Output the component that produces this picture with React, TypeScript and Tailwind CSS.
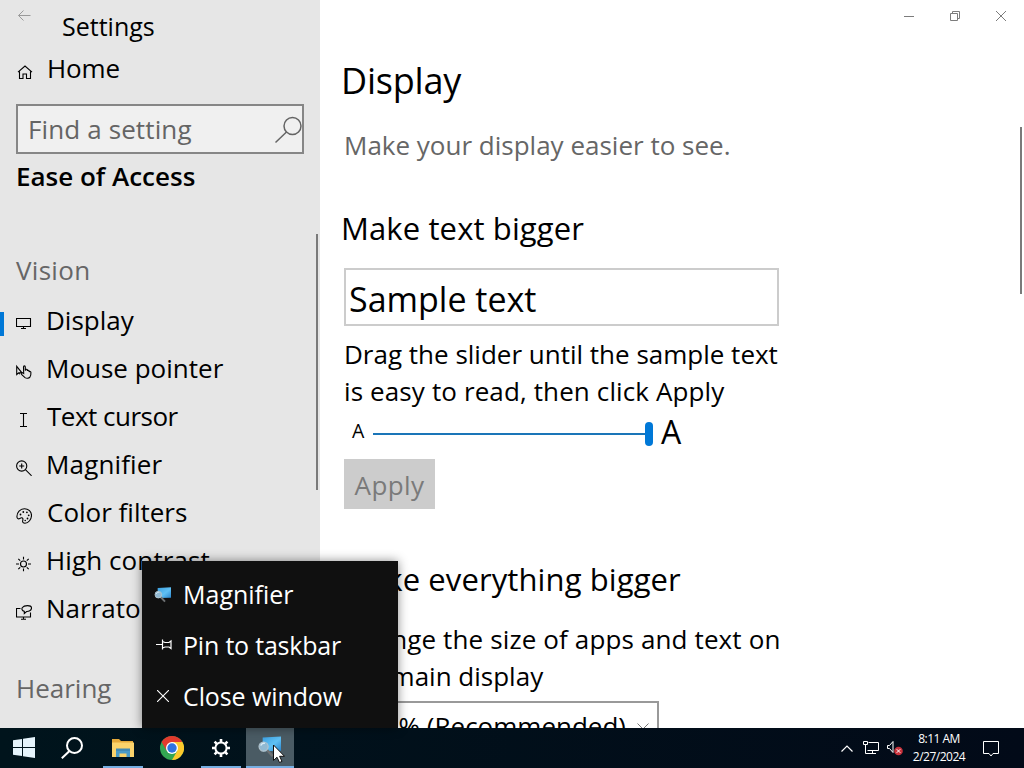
import type { ReactNode } from "react";
import { clsx } from "clsx";

type IconProps = { className?: string };

// --- Sidebar icons (16px grid, 1px strokes) ------------------------------------
function Icon({ className, children }: { className?: string; children: ReactNode }) {
  return (
    <svg
      aria-hidden="true"
      className={clsx("h-4 w-4 shrink-0", className)}
      fill="none"
      stroke="currentColor"
      strokeWidth="1.1"
      viewBox="0 0 16 16"
    >
      {children}
    </svg>
  );
}

const HomeIcon = () => (
  <Icon>
    <path d="M1 8.200 8 2l7 6.200M2.500 7.500v7h3.500v-4.500h3.500v4.500h4v-7" />
  </Icon>
);

const DisplayIcon = () => (
  <Icon>
    <path d="M.5 2.500h14v8H.5zM7.500 11v2M5 12.500h5" />
  </Icon>
);

const MousePointerIcon = () => (
  <Icon>
    <path d="M.7 2.300v8.200l2-1.700h3.200zM2.700 8.800l1 1.500" />
    <path d="m7.700 9.500-.2-6.600c0-1.400 1.800-1.400 1.800 0v3.600l.3-.8c.4-.8 1.600-.6 1.700.2v1c.3-.9 1.700-.8 1.800.2v.8c.4-.8 1.800-.5 1.800.4.200 2.500-.2 3.800-1 4.900-1 1.300-3.500 1.300-4.900.4L5.500 10.300c-.9-1.100.3-2 1.200-1.400z" />
  </Icon>
);

const TextCursorIcon = () => (
  <Icon>
    <path d="M4 1.500h7M4 14.500h7M7.500 1.500v13" />
  </Icon>
);

const MagnifierIcon = () => (
  <Icon>
    <circle cx="5.700" cy="6" r="5.100" />
    <path d="m9.400 9.700 6.200 6.100M3.200 6h5M5.700 3.500v5" />
  </Icon>
);

const PaletteIcon = () => (
  <Icon>
    <path d="M8.500.8c4 0 7 2.800 7 6.600s-3 7.800-6.500 7.800c-1.700 0-2.600-1-2.400-2.200.2-1 .6-1.700.2-2.500-.6-1.200-1.800-.6-3 0-1.500.8-2.900.1-2.900-1.900C.9 4.500 4 .8 8.500.8z" />
    <g fill="currentColor" stroke="none">
      <circle cx="4.500" cy="6.500" r=".9" />
      <circle cx="7.300" cy="4" r=".9" />
      <circle cx="10.900" cy="4.300" r=".9" />
      <circle cx="12.700" cy="7.300" r=".9" />
      <circle cx="11.500" cy="10.500" r=".9" />
      <circle cx="9.200" cy="12.500" r=".8" />
    </g>
  </Icon>
);

const BrightnessIcon = () => (
  <Icon>
    <circle cx="7.500" cy="8" r="3" />
    <path d="M7.500.7v2.800M7.500 12.500v2.800M0 8h3M12 8h3M2.300 2.800l1.900 1.900M10.800 11.300l1.900 1.900M12.700 2.800l-1.900 1.900M4.200 11.300l-1.900 1.900" />
  </Icon>
);

const NarratorIcon = () => (
  <Icon>
    <path d="M4.500 4.500h-4v8.500h14V8.500M7.500 13v2M5 15.300h5" />
    <path d="M8.300 9.500V7.400C6 6.800 5.400 5 6.400 3.500 8 1.200 15.300.700 15.500 3.900c.1 2.700-3.200 3.700-4.900 3.600z" />
  </Icon>
);

// --- Shared icons --------------------------------------------------------------
function SearchGlyph({ className }: IconProps) {
  return (
    <svg aria-hidden="true" className={className} fill="none" stroke="currentColor" strokeWidth="1.500" viewBox="0 0 28 28">
      <circle cx="18.500" cy="10" r="8.500" />
      <path d="M12.500 16 1.500 26.500" />
    </svg>
  );
}

function MagnifierApp({ className }: IconProps) {
  return (
    <svg aria-hidden="true" className={className} viewBox="0 0 26 24">
      <defs>
        <linearGradient id="screen" x1="0" x2="1" y1="0" y2="1">
          <stop offset="0" stopColor="#3b9fe0" />
          <stop offset=".55" stopColor="#5fc0f4" />
          <stop offset="1" stopColor="#2a84cc" />
        </linearGradient>
      </defs>
      <path d="M5 1.500 25 .5v15.500l-20 .5z" fill="url(#screen)" />
      <path d="m9.500 15 6.500 7" stroke="#6f7274" strokeWidth="2.800" />
      <circle cx="6" cy="11.500" fill="#91b9d2" r="5" stroke="#b5c5cd" strokeWidth="1.200" />
      <path d="M3 10.500c.5-2 2.500-3 4.500-2.400" fill="none" stroke="#d9ebf6" strokeWidth="1.500" />
    </svg>
  );
}

// --- Sidebar -------------------------------------------------------------------
const visionItems = [
  { label: "Display", icon: DisplayIcon, active: true },
  { label: "Mouse pointer", icon: MousePointerIcon },
  { label: "Text cursor", icon: TextCursorIcon, spacing: "ml-[15px] tracking-[-0.5px]" },
  { label: "Magnifier", icon: MagnifierIcon, spacing: "ml-3.5 tracking-[0.15px]" },
  { label: "Color filters", icon: PaletteIcon, spacing: "ml-[15px]" },
  { label: "High contrast", icon: BrightnessIcon, spacing: "ml-3.5 tracking-[0.1px]" },
  { label: "Narrator", icon: NarratorIcon },
];

function Sidebar() {
  return (
    <aside className="relative flex w-80 shrink-0 flex-col overflow-hidden bg-[#e6e6e6]">
      <div className="flex h-[52px] shrink-0">
        <svg aria-hidden="true" className="mt-2.5 ml-[17px] h-3 w-[14px]" fill="none" stroke="#9a9a9a" viewBox="0 0 14 12">
          <path d="M13.500 5.500H1.500M6.500.5l-5 5 5 5" />
        </svg>
        <span className="ml-[31px] text-[25px] leading-[53px]">Settings</span>
      </div>

      <div className="flex h-8 shrink-0 items-center pl-[17px]">
        <span className="pt-2"><HomeIcon /></span>
        <span className="ml-3.5 tracking-[-0.1px]">Home</span>
      </div>

      <div className="mx-4 mt-5 flex h-[50px] shrink-0 items-center justify-between border-2 border-[#868686] bg-[#f0f0f0] pl-2.5 text-[#646464]">
        <span className="tracking-[0.12px]">Find a setting</span>
        <SearchGlyph className="mt-0.5 h-7 w-7" />
      </div>

      <h2 className="flex h-11 shrink-0 items-center pl-4 text-[26px] font-semibold">
        Ease of Access
      </h2>

      <h3 className="mt-12 flex h-12 shrink-0 items-center pl-4 tracking-[0.3px] text-[#666]">Vision</h3>
      <nav className="mt-0.5 flex shrink-0 flex-col">
        {visionItems.map(({ label, icon: ItemIcon, active, spacing }) => (
          <div className="flex h-12 items-center" key={label}>
            <span className={clsx("mt-2 h-6 w-1", active && "bg-[#0078d7]")} />
            <span className="ml-3 pt-[7px]"><ItemIcon /></span>
            <span className={clsx("whitespace-nowrap", spacing ?? "ml-3.5")}>{label}</span>
          </div>
        ))}
      </nav>

      <h3 className="mt-8 flex h-12 shrink-0 items-center pl-4 text-[#666]">Hearing</h3>
      <div className="mt-0.5 flex h-12 shrink-0 items-center pl-[47px]">Audio</div>

      <div className="absolute top-[234px] right-0.5 h-64 w-0.5 bg-[#7a7a7a]" />
    </aside>
  );
}

// --- Settings page -------------------------------------------------------------
function CaptionButtons() {
  return (
    <div className="flex h-8 justify-end text-[#7c7c7c]">
      <span className="flex w-[46px] items-center justify-center">
        <span className="h-px w-2.5 bg-current" />
      </span>
      <span className="flex w-[46px] items-center justify-center">
        <svg aria-hidden="true" className="h-2.5 w-2.5" fill="none" stroke="currentColor" viewBox="0 0 10 10">
          <path d="M.5 2.500h7v7h-7zM2.500 2.500v-2h7v7h-2" />
        </svg>
      </span>
      <span className="flex w-[46px] items-center justify-center">
        <svg aria-hidden="true" className="h-2.5 w-2.5" fill="none" stroke="currentColor" viewBox="0 0 10 10">
          <path d="m0 0 10 10M10 0 0 10" />
        </svg>
      </span>
    </div>
  );
}

function DisplayPage() {
  return (
    <main className="relative flex-1 overflow-hidden bg-white">
      <CaptionButtons />
      <div className="ml-6 flex w-[440px] flex-col">
        <h1 className="mt-[25px] -ml-[3px] text-[36px] leading-[48px] tracking-[-0.2px]">Display</h1>
        <p className="mt-[22px] leading-9 whitespace-nowrap text-[#666]">Make your display easier to see.</p>

        <h2 className="mt-[45px] -ml-[3px] text-[31px] leading-10 tracking-[0.12px]">Make text bigger</h2>
        <div className="mt-5 h-[58px] w-[435px] border-2 border-[#ccc] pl-[3px] text-[34px] leading-[59px]">
          Sample text
        </div>
        <p className="mt-2.5 leading-[37px] whitespace-nowrap">
          Drag the slider until the sample text
          <br />
          <span className="tracking-[0.12px]">is easy to read, then click Apply</span>
        </p>
        <div className="flex h-12 items-center pl-2">
          <span className="w-[21px] pb-1.5 text-[19.500px] leading-6">A</span>
          <span className="h-0.5 w-[272px] bg-[#1a75b8]" />
          <span className="h-6 w-2 rounded-full bg-[#0078d7]" />
          <span className="ml-2 pb-1 text-[32px] leading-8">A</span>
        </div>
        <button className="mt-px h-[50px] w-[91px] bg-[#ccc] leading-[52px] tracking-[0.4px] text-[#7a7a7a]" type="button">
          Apply
        </button>

        <h2 className="mt-[50px] -ml-[3px] text-[31px] leading-10 tracking-[0.1px] whitespace-nowrap">Make everything bigger</h2>
        <p className="mt-[22px] leading-[37px] whitespace-nowrap">
          <span className="tracking-[0.13px]">Change the size of apps and text on</span>
          <br />
          the main display
        </p>
        <div className="mt-[6px] flex h-[50px] w-[315px] items-center justify-between border-2 border-[#999] pr-2 pl-2 whitespace-nowrap">
          <span>100% (Recommended)</span>
          <svg aria-hidden="true" className="h-[7px] w-3" fill="none" stroke="#777" viewBox="0 0 12 7">
            <path d="m.5.5 5.500 5.500L11.500.5" />
          </svg>
        </div>
      </div>

      <div className="absolute top-[127px] right-0.5 h-[167px] w-0.5 bg-[#7a7a7a]" />
    </main>
  );
}

// --- Jump list -----------------------------------------------------------------
function JumpList() {
  return (
    <div className="absolute top-[561px] left-[142px] flex h-[167px] w-64 flex-col bg-[#101010] pt-[7px] text-[25px] text-white shadow-[0_0_10px_rgba(0,0,0,0.45)]">
      <div className="flex h-[51px] items-center pl-3">
        <MagnifierApp className="mt-0.5 h-4 w-[18px]" />
        <span className="ml-[11px]">Magnifier</span>
      </div>
      <div className="flex h-[51px] items-center pl-3.5">
        <svg aria-hidden="true" className="h-3 w-4" fill="none" stroke="currentColor" strokeWidth="1.200" viewBox="0 0 16 12">
          <path d="M0 5.500h6.500M6.500.5v10M6.500 2.500 9 3.500h4l2-1.500v7.500l-2-1.500H9l-2.500 1" />
        </svg>
        <span className="ml-[11px] tracking-[-0.2px]">Pin to taskbar</span>
      </div>
      <div className="flex h-[51px] items-center pl-[15px]">
        <svg aria-hidden="true" className="h-3 w-3" fill="none" stroke="currentColor" strokeWidth="1.100" viewBox="0 0 12 12">
          <path d="m0 0 12 12M12 0 0 12" />
        </svg>
        <span className="ml-3.5 tracking-[-0.1px]">Close window</span>
      </div>
    </div>
  );
}

// --- Taskbar -------------------------------------------------------------------
type TaskButtonProps = { children: ReactNode; open?: boolean; active?: boolean };

function TaskButton({ children, open, active }: TaskButtonProps) {
  return (
    <div className={clsx("flex h-10 w-12 flex-col items-center", active && "bg-[#4a5b64]")}>
      <span className="flex flex-1 items-center">{children}</span>
      <span className={clsx("h-0.5", active ? "w-12" : "w-10", (open || active) && "bg-[#76aee2]")} />
    </div>
  );
}

function Taskbar() {
  return (
    <footer className="flex h-10 items-center justify-between bg-linear-to-r from-[#00141c] to-[#020a18] text-white">
      <div className="flex">
        <TaskButton>
          <svg aria-hidden="true" className="h-[21px] w-[22px]" fill="#e6f4fc" viewBox="0 0 22 21">
            <path d="M0 3.300 9 2v8H0zM10 1.800 22 0v10H10zM0 11h9v8l-9-1.300zM10 11h12v10l-12-1.800z" />
          </svg>
        </TaskButton>
        <TaskButton>
          <svg aria-hidden="true" className="mt-0.5 h-[22px] w-[22px]" fill="none" stroke="#fff" strokeWidth="2" viewBox="0 0 22 22">
            <circle cx="13.500" cy="8.500" r="7.500" />
            <path d="M8.500 14 .8 21.300" />
          </svg>
        </TaskButton>
        <div className="ml-[3px] flex gap-px">
          <TaskButton open>
            <svg aria-hidden="true" className="mt-0.5 h-[19px] w-[22px]" viewBox="0 0 22 19">
              <path d="M0 0h7l2 2h12v5H0z" fill="#e5a93a" />
              <path d="M0 3.500h22V18H0z" fill="#fbd36b" />
              <path d="M4 18v-7h14v7h-3.500v-3.500h-7V18z" fill="#4b9bc7" />
              <path d="M4 9.500h14V12H4z" fill="#428ab5" />
            </svg>
          </TaskButton>
          <TaskButton>
            <svg aria-hidden="true" className="mt-0.5 h-6 w-6" viewBox="0 0 24 24">
              <circle cx="12" cy="12" fill="#33a652" r="12" />
              <path d="M1.600 6A12 12 0 0 1 22.400 6H12l-5.200 9z" fill="#e33b2e" />
              <path d="M22.400 6A12 12 0 0 1 12 24l5.200-9L12 6z" fill="#fdc92c" />
              <circle cx="12" cy="12" fill="#fff" r="6" />
              <circle cx="12" cy="12" fill="#2f73e0" r="4.700" />
            </svg>
          </TaskButton>
          <TaskButton open>
            <svg aria-hidden="true" className="mt-0.5 h-5 w-5" fill="none" stroke="#fff" viewBox="0 0 20 20">
              <circle cx="10" cy="10" r="5.600" strokeWidth="2" />
              <path
                d="M10 1v3M10 16v3M1 10h3M16 10h3M3.600 3.600l2.200 2.200M14.200 14.200l2.200 2.200M16.400 3.600l-2.200 2.200M5.800 14.200l-2.200 2.200"
                strokeWidth="2.600"
              />
            </svg>
          </TaskButton>
          <TaskButton active>
            <MagnifierApp className="h-[22px] w-6" />
          </TaskButton>
        </div>
      </div>

      <div className="flex h-10 items-center">
        <svg aria-hidden="true" className="h-[7px] w-3" fill="none" stroke="#fff" strokeWidth="1.200" viewBox="0 0 12 7">
          <path d="m.5 6.500 5.500-5.500 5.500 5.500" />
        </svg>
        <svg aria-hidden="true" className="ml-2.5 h-[14px] w-4" fill="none" stroke="#fff" viewBox="0 0 16 14">
          <path d="M5.500 1.500h10v8h-11M.5.500h4v3h-4zM2.500 3.500v9h4M9.500 9.500v3M6 12.500h7" />
        </svg>
        <svg aria-hidden="true" className="ml-2 h-4 w-4" fill="none" viewBox="0 0 16 16">
          <path d="M.5 5.500h2l3.500-4v11l-3.500-4h-2z" stroke="#fff" />
          <circle cx="11.500" cy="11" fill="#c8323c" r="4.300" />
          <path d="m9.700 9.200 3.600 3.600M13.300 9.200l-3.600 3.600" stroke="#fff" />
        </svg>
        <div className="mr-px ml-[9px] flex w-[54px] flex-col items-center text-[12px] leading-[18px] tracking-[-0.5px] whitespace-nowrap">
          <span>8:11 AM</span>
          <span>2/27/2024</span>
        </div>
        <svg aria-hidden="true" className="mt-px mr-[25px] ml-4 h-4 w-4" fill="none" stroke="#fff" viewBox="0 0 16 16">
          <path d="M.5.500h15v12H10l-2 2.500-2-2.500H.5z" />
        </svg>
      </div>
    </footer>
  );
}

function Cursor() {
  return (
    <svg aria-hidden="true" className="absolute top-[744px] left-[273px] h-[19px] w-3" viewBox="0 0 12 19">
      <path d="M.5 1v15.500l3.500-3.300 2.500 5.300 2.500-1.100-2.400-5.100h4.900z" fill="#fff" stroke="#111" />
    </svg>
  );
}

export default function App() {
  return (
    <div className="relative h-[768px] w-[1024px] overflow-hidden font-['Open_Sans',sans-serif] text-[26px] leading-9 text-black">
      <div className="flex h-[728px]">
        <Sidebar />
        <DisplayPage />
      </div>
      <Taskbar />
      <JumpList />
      <Cursor />
    </div>
  );
}
